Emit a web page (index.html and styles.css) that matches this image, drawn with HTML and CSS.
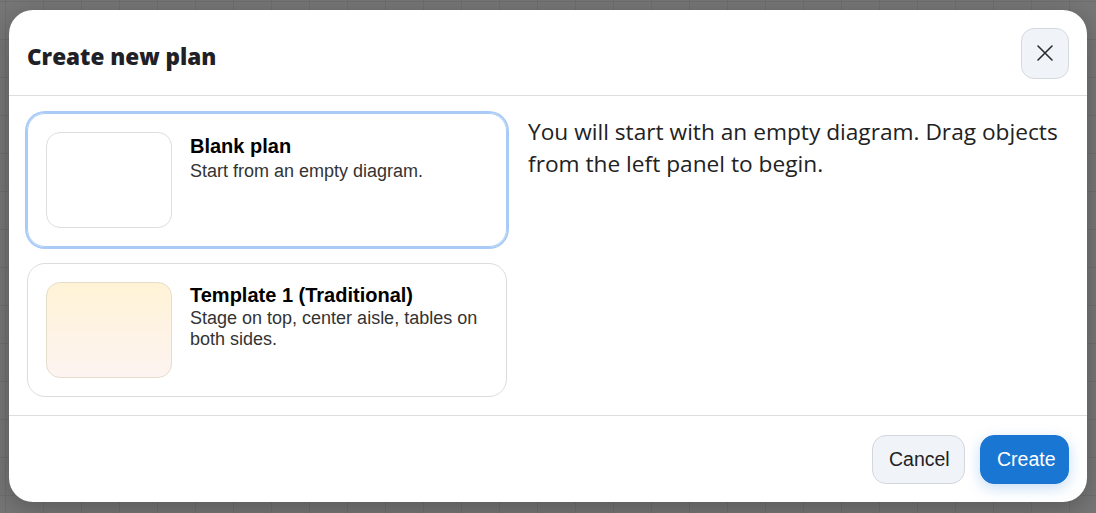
FILE: index.html
```html
<!DOCTYPE html>
<html lang="en">
<head>
<meta charset="utf-8">
<title>Create new plan</title>
<link rel="stylesheet" href="styles.css">
</head>
<body>
<div class="backdrop">
  <div class="dialog">
    <header class="dlg-head">
      <h2 class="dlg-title">Create new plan</h2>
      <button class="close-btn" aria-label="Close">
        <svg width="18" height="18" viewBox="0 0 18 18"><path d="M2 2L16 16M16 2L2 16" stroke="#2a2d33" stroke-width="1.6" stroke-linecap="round"/></svg>
      </button>
    </header>
    <section class="dlg-body">
      <div class="options">
        <div class="option selected">
          <div class="thumb thumb-blank"></div>
          <div class="opt-text">
            <div class="opt-title">Blank plan</div>
            <div class="opt-desc">Start from an empty diagram.</div>
          </div>
        </div>
        <div class="option">
          <div class="thumb thumb-trad"></div>
          <div class="opt-text">
            <div class="opt-title">Template 1 (Traditional)</div>
            <div class="opt-desc">Stage on top, center aisle, tables on both sides.</div>
          </div>
        </div>
      </div>
      <p class="detail">You will start with an empty diagram. Drag objects from the left panel to begin.</p>
    </section>
    <footer class="dlg-foot">
      <button class="btn btn-cancel">Cancel</button>
      <button class="btn btn-create">Create</button>
    </footer>
  </div>
</div>
</body>
</html>
```
FILE: styles.css
```css
html, body {
  margin: 0;
  padding: 0;
  width: 1096px;
  height: 513px;
  overflow: hidden;
}
.backdrop {
  width: 1096px;
  height: 513px;
  box-sizing: border-box;
  padding: 10px 9px 11px 9px;
  background-color: #767676;
  background-image:
    linear-gradient(to right, #6e6e6e 1px, transparent 1px),
    linear-gradient(to bottom, #6e6e6e 1px, transparent 1px);
  background-size: 38px 38px;
  background-position: 5px 1px;
}
.dialog {
  width: 1078px;
  height: 492px;
  background: #fff;
  border-radius: 24px;
  box-shadow: 0 6px 24px rgba(0,0,0,0.25);
  display: flex;
  flex-direction: column;
  overflow: hidden;
}
.dlg-head {
  height: 86px;
  box-sizing: border-box;
  display: flex;
  align-items: center;
  justify-content: space-between;
  padding: 0 18px 0 18px;
  border-bottom: 1px solid #dedede;
}
.dlg-title {
  margin: 0;
  font-family: "Open Sans", "Noto Sans", sans-serif;
  font-weight: 800;
  font-size: 22.5px;
  color: #1f2126;
  padding-top: 8px;
}
.close-btn {
  width: 48px;
  height: 51px;
  border-radius: 13px;
  border: 1px solid #d4d8df;
  background: #f0f3f8;
  display: flex;
  align-items: center;
  justify-content: center;
  padding: 0;
  margin-top: 1px;
}
.dlg-body {
  flex: 1;
  display: flex;
  gap: 21px;
  padding: 17px 18px 0 18px;
  border-bottom: 1px solid #dedede;
}
.options {
  width: 480px;
  display: flex;
  flex-direction: column;
  gap: 16px;
}
.option {
  height: 134px;
  box-sizing: border-box;
  border: 1px solid #dcdcdc;
  border-radius: 18px;
  padding: 18px;
  display: flex;
  gap: 18px;
}
.option.selected {
  border-color: #a9cbf6;
  box-shadow: 0 0 0 2px #a9cbf6;
}
.thumb {
  width: 126px;
  height: 96px;
  box-sizing: border-box;
  border-radius: 14px;
  flex: none;
}
.thumb-blank {
  background: #fff;
  border: 1px solid #dedede;
}
.thumb-trad {
  background: linear-gradient(to bottom, #fff3d6, #fdf3f1);
  border: 1px solid #e6dccb;
}
.opt-text {
  font-family: "Liberation Sans", Arial, sans-serif;
  padding-top: 2px;
}
.selected .opt-text {
  padding-top: 3px;
}
.opt-title {
  font-weight: 700;
  font-size: 20px;
  color: #000;
  line-height: 22px;
}
.opt-desc {
  font-size: 18px;
  color: #333;
  line-height: 21px;
  margin-top: 2px;
}
.selected .opt-desc {
  margin-top: 4px;
}
.detail {
  margin: 0;
  width: 541px;
  font-family: "Open Sans", "Noto Sans", sans-serif;
  font-size: 22.7px;
  line-height: 32px;
  color: #222;
  padding-top: 3px;
}
.dlg-foot {
  height: 86px;
  box-sizing: border-box;
  display: flex;
  justify-content: flex-end;
  align-items: flex-start;
  gap: 15px;
  padding: 19px 18px 0 18px;
}
.btn {
  height: 49px;
  border-radius: 14px;
  font-family: "Liberation Sans", Arial, sans-serif;
  font-size: 19.5px;
  padding: 0 16px;
}
.btn-cancel {
  width: 93px;
  background: #f0f3f8;
  border: 1px solid #d2d6dd;
  color: #222;
}
.btn-create {
  width: 89px;
  background: #1976d2;
  border: 1px solid #1976d2;
  color: #fff;
  box-shadow: 0 4px 14px rgba(25,118,210,0.25);
}
```
